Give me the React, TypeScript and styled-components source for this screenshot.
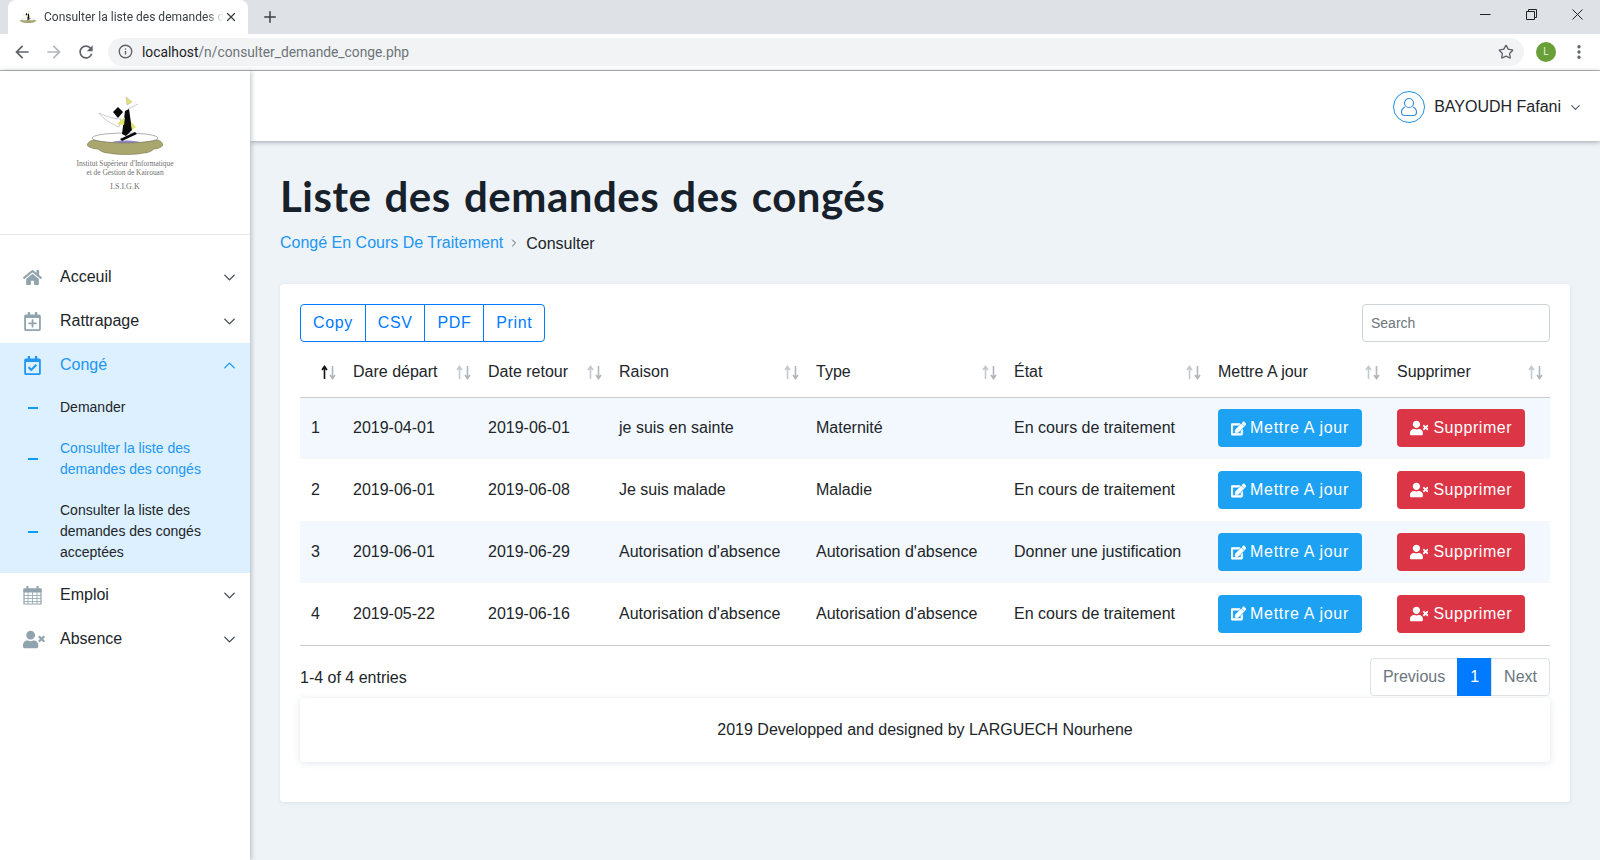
import { FC, ReactNode } from "react";
import styled, { createGlobalStyle } from "styled-components";
import { ChevronDown, ChevronRight, ChevronUp, EllipsisVertical, Info, Plus, Star, X } from "lucide-react";
import { FaEdit, FaHome, FaRegCalendarCheck, FaRegCalendarPlus, FaUserTimes } from "react-icons/fa";

const columns: { label: string; width: number }[] = [
  { label: "", width: 41 },
  { label: "Dare départ", width: 135 },
  { label: "Date retour", width: 131 },
  { label: "Raison", width: 197 },
  { label: "Type", width: 198 },
  { label: "État", width: 204 },
  { label: "Mettre A jour", width: 179 },
  { label: "Supprimer", width: 165 },
];

const rows = [
  { id: 1, start: "2019-04-01", end: "2019-06-01", reason: "je suis en sainte", type: "Maternité", state: "En cours de traitement" },
  { id: 2, start: "2019-06-01", end: "2019-06-08", reason: "Je suis malade", type: "Maladie", state: "En cours de traitement" },
  { id: 3, start: "2019-06-01", end: "2019-06-29", reason: "Autorisation d'absence", type: "Autorisation d'absence", state: "Donner une justification" },
  { id: 4, start: "2019-05-22", end: "2019-06-16", reason: "Autorisation d'absence", type: "Autorisation d'absence", state: "En cours de traitement" },
];

const Global = createGlobalStyle`
  html, body { margin: 0; padding: 0; background: #fff; }
  body { font-family: "Liberation Sans", Arial, sans-serif; font-size: 16px; color: #212529; }
  * { box-sizing: border-box; }
`;

const Page = styled.div`
  width: 1600px;
  height: 860px;
  overflow: hidden;
  display: flex;
  flex-direction: column;
`;

/* browser chrome */
const TabStrip = styled.div`
  height: 34px;
  background: #dee1e6;
  display: flex;
  align-items: flex-end;
  padding-left: 8px;
`;
const Tab = styled.div`
  width: 240px;
  height: 34px;
  background: #fff;
  border-radius: 8px 8px 0 0;
  display: flex;
  align-items: center;
  padding: 0 10px 0 12px;
  color: #3c4043;
`;
const TabTitle = styled.span`
  flex: 1;
  margin-left: 8px;
  font: 12px Roboto, sans-serif;
  white-space: nowrap;
  overflow: hidden;
  -webkit-mask-image: linear-gradient(to right, #000 90%, transparent);
  mask-image: linear-gradient(to right, #000 90%, transparent);
`;
const NewTab = styled.div`
  margin-left: 13px;
  height: 34px;
  display: flex;
  align-items: center;
  color: #3c4043;
`;
const WindowControls = styled.div`
  margin-left: auto;
  height: 34px;
  display: flex;
  color: #222;
`;
const WindowButton = styled.div`
  width: 46px;
  height: 28px;
  display: flex;
  align-items: center;
  justify-content: center;
`;
const Toolbar = styled.div`
  height: 37px;
  background: #fff;
  border-bottom: 1px solid #b4b4b4;
  display: flex;
  align-items: center;
  padding: 0 0 1px 12px;
`;
const NavIcon = styled.div<{ $muted?: boolean }>`
  width: 32px;
  display: flex;
  color: ${(p) => (p.$muted ? "#b4b6b9" : "#5f6368")};
`;
const Omnibox = styled.div`
  width: 1416px;
  height: 28px;
  background: #f1f3f4;
  border-radius: 14px;
  display: flex;
  align-items: center;
  padding: 0 10px 0 10px;
  color: #5f6368;
  font: 13.8px Roboto, sans-serif;
`;
const Url = styled.span`
  margin-left: 9px;
  flex: 1;
  color: #6f7479;
  b {
    font-weight: 400;
    color: #202124;
  }
`;
const Avatar = styled.div`
  width: 20px;
  height: 20px;
  margin-left: 12px;
  border-radius: 50%;
  background: #689f38;
  color: #e8f2dd;
  font: 10px Roboto, sans-serif;
  display: flex;
  align-items: center;
  justify-content: center;
`;
const MenuDots = styled.div`
  margin-left: 14px;
  display: flex;
  color: #5f6368;
`;

/* app frame */
const Frame = styled.div`
  flex: 1;
  display: flex;
  min-height: 0;
`;
const Sidebar = styled.aside`
  width: 250px;
  flex: none;
  background: #fff;
  box-shadow: 1px 0 5px rgba(60, 70, 80, 0.35);
  z-index: 2;
`;
const LogoBlock = styled.div`
  height: 164px;
  border-bottom: 1px solid #e6e8ea;
  display: flex;
  flex-direction: column;
  align-items: center;
  padding-top: 26px;
  margin-bottom: 20px;
`;
const LogoText = styled.div`
  margin-top: 4px;
  font: 7.400px/9px "Liberation Serif", serif;
  color: #707070;
  text-align: center;
`;
const LogoAbbr = styled.div`
  margin-top: 5px;
  font: 8px/9px "Liberation Serif", serif;
  color: #707070;
`;
const NavGroup = styled.div<{ $open?: boolean }>`
  background: ${(p) => (p.$open ? "#dcf0ff" : "transparent")};
`;
const NavRow = styled.div<{ $active?: boolean }>`
  height: 44px;
  display: flex;
  align-items: center;
  padding: 0 11px 0 23px;
  color: ${(p) => (p.$active ? "#2196f3" : "#212529")};
  & > svg {
    color: ${(p) => (p.$active ? "#2196f3" : "#3f4a52")};
  }
`;
const NavIconBox = styled.span<{ $active?: boolean }>`
  width: 37px;
  height: 19px;
  display: flex;
  align-items: center;
  font-size: 19px;
  color: ${(p) => (p.$active ? "#2196f3" : "#90a4ae")};
`;
const NavLabel = styled.span`
  flex: 1;
`;
const SubItem = styled.div<{ $active?: boolean }>`
  display: flex;
  align-items: center;
  gap: 22px;
  padding: 10px 30px 10px 28px;
  font-size: 14px;
  line-height: 21px;
  color: ${(p) => (p.$active ? "#2196f3" : "#212529")};
  &::before {
    content: "";
    width: 10px;
    height: 2px;
    flex: none;
    background: #0a9cff;
  }
`;
const WideUserIcon = styled(FaUserTimes)`
  width: 1.150em;
  height: 1em;
  flex: none;
`;
const BoldEditIcon = styled(FaEdit)`
  stroke: currentColor;
  stroke-width: 24px;
`;

/* main column */
const Main = styled.main`
  flex: 1;
  min-width: 0;
  background: #eef3f7;
`;
const Topbar = styled.header`
  height: 70px;
  background: #fff;
  box-shadow: 0 1px 5px rgba(60, 70, 80, 0.45);
  display: flex;
  align-items: center;
  justify-content: flex-end;
  padding: 2px 17px 0 0;
`;
const UserBadge = styled.div`
  width: 32px;
  height: 32px;
  border: 1px solid #1e90e0;
  border-radius: 50%;
  display: flex;
  align-items: center;
  justify-content: center;
  margin-right: 9px;
`;
const UserName = styled.span`
  margin-right: 7px;
`;
const Content = styled.div`
  padding: 30px 30px 0;
`;
const Title = styled.h1`
  margin: 0;
  font: 700 42px/50px "Comic Sans MS", Lato, sans-serif;
  letter-spacing: 0.5px;
  word-spacing: 2.500px;
  color: #17212b;
`;
const Crumbs = styled.nav`
  margin-top: 10px;
  height: 24px;
  display: flex;
  align-items: center;
  line-height: 24px;
  a {
    color: #2196f3;
  }
  svg {
    margin: 0 6px 0 5px;
    color: #555f68;
  }
  span {
    padding-top: 2px;
  }
`;
const Card = styled.section`
  margin-top: 29px;
  padding: 20px 20px 40px;
  background: #fff;
  border-radius: 4px;
  box-shadow: 0 1px 4px rgba(120, 140, 160, 0.15);
`;
const TableTools = styled.div`
  display: flex;
  justify-content: space-between;
`;
const ButtonGroup = styled.div`
  display: flex;
`;
const ExportButton = styled.button`
  height: 38px;
  padding: 0 12px;
  margin-left: -1px;
  background: #fff;
  border: 1px solid #007bff;
  color: #007bff;
  font: 16px "Liberation Sans", sans-serif;
  letter-spacing: 0.6px;
  &:first-child {
    margin-left: 0;
    border-radius: 4px 0 0 4px;
  }
  &:last-child {
    border-radius: 0 4px 4px 0;
  }
`;
const Search = styled.input`
  width: 188px;
  height: 38px;
  padding: 0 8px;
  border: 1px solid #ced4da;
  border-radius: 4px;
  font: 14px "Liberation Sans", sans-serif;
  &::placeholder {
    color: #6c757d;
  }
`;
const Table = styled.table`
  width: 1250px;
  table-layout: fixed;
  border-collapse: collapse;
  border-bottom: 1px solid #cbcbcb;
`;
const HeadCell = styled.th`
  height: 55px;
  padding: 6px 4px 0 12px;
  font-weight: 400;
  text-align: left;
  border-bottom: 1px solid #cbcbcb;
  &:last-child {
    padding-right: 6px;
  }
`;
const HeadInner = styled.div`
  display: flex;
  align-items: center;
  justify-content: space-between;
`;
const Row = styled.tr<{ $striped: boolean }>`
  height: 62px;
  background: ${(p) => (p.$striped ? "#f2f8fd" : "#fff")};
`;
const Cell = styled.td`
  padding: 0 0 0 12px;
  white-space: nowrap;
  &:first-child {
    padding-left: 11px;
  }
`;
const ActionButton = styled.button<{ $tone: "blue" | "red" }>`
  height: 38px;
  padding: 0 13px;
  display: inline-flex;
  align-items: center;
  gap: ${(p) => (p.$tone === "blue" ? "4px" : "5px")};
  border: 0;
  border-radius: 4px;
  color: #fff;
  background: ${(p) => (p.$tone === "blue" ? "#1da1f2" : "#dc3545")};
  font: 16px "Liberation Sans", sans-serif;
  letter-spacing: ${(p) => (p.$tone === "blue" ? "0.7px" : "0.55px")};
`;
const TableFoot = styled.div`
  margin-top: 12px;
  display: flex;
  align-items: center;
  justify-content: space-between;
  & > span {
    padding-top: 2px;
  }
`;
const Pager = styled.div`
  display: flex;
  height: 38px;
`;
const PageLink = styled.span<{ $current?: boolean }>`
  padding: 0 12px;
  display: flex;
  align-items: center;
  border: 1px solid ${(p) => (p.$current ? "#007bff" : "#dee2e6")};
  background: ${(p) => (p.$current ? "#007bff" : "#fff")};
  color: ${(p) => (p.$current ? "#fff" : "#6c757d")};
  margin-left: -1px;
  &:first-child {
    border-radius: 4px 0 0 4px;
  }
  &:last-child {
    border-radius: 0 4px 4px 0;
  }
`;
const Footer = styled.footer`
  margin-top: 2px;
  height: 64px;
  display: flex;
  align-items: center;
  justify-content: center;
  border-radius: 4px;
  box-shadow: 0 1px 7px rgba(120, 140, 160, 0.22);
`;

const Logo: FC<{ size: number }> = ({ size }) => (
  <svg width={size} height={(size * 58) / 76} viewBox="0 0 76 58">
    <path d="M12 16c6 3 14 6 22 6l-2 8c-7-3-16-8-20-14z" fill="#fff" stroke="#999" strokeWidth=".5" />
    <path d="M41 12L51 7" stroke="#999" strokeWidth=".5" />
    <path d="M39 0l6 5-5 3z" fill="#e3e56a" stroke="#888" strokeWidth=".3" />
    <path d="M26 15l5-5 5 5-5 6z" fill="#0a0a0a" />
    <ellipse cx="38" cy="41" rx="33" ry="5" fill="#fff" stroke="#777" strokeWidth=".6" />
    <path d="M25 45c6-2 20-2 28 0l-12 2z" fill="#8f86c8" />
    <path d="M0 48c1-3 4-5 7-5 13 4 49 4 63 0 3 0 6 3 6 5-1 2-5 4-9 4-2 2-6 4-10 4-10 2-26 2-36 0-4 0-8-2-10-4-5 0-10-2-11-4z" fill="#aaa76e" stroke="#6f6d45" strokeWidth=".5" />
    <path d="M38 14l4-2 3 21-6 6-4-2z" fill="#0a0a0a" />
    <path d="M30 27l8-7-1 8z" fill="#dfe36a" />
    <path d="M44 25l5 5-4 3z" fill="#e3e56a" />
    <path d="M33 42l15-7 2 2-15 7z" fill="#0a0a0a" />
  </svg>
);

const SortArrows: FC<{ active?: boolean }> = ({ active }) => (
  <svg width="17" height="15" viewBox="0 0 17 15" fill="none" strokeWidth="1.6">
    <path d="M4.500 14V2M2 5l2.500-3.500L7 5" stroke={active ? "#111" : "#c4c9cf"} />
    <path d="M12.500 1v12M10 10l2.500 3.500L15 10" stroke="#b0b6bd" />
  </svg>
);

const UserOutline = () => (
  <svg width="18" height="20" viewBox="0 0 18 20" fill="none" stroke="#3f8fe0" strokeWidth="1.200">
    <circle cx="9" cy="6" r="4.500" />
    <path d="M5 10c-2 1-3.500 2.500-3.500 5 0 2 1 3.500 3 3.500h9c2 0 3-1.500 3-3.500 0-2.500-1.500-4-3.500-5" />
  </svg>
);

const CalendarGrid = () => (
  <svg width="19" height="19" viewBox="0 0 19 19" fill="none" stroke="currentColor">
    <path d="M1 3h17v15H1z" strokeWidth="1.200" />
    <path d="M1 3h17v3H1z" fill="currentColor" />
    <path d="M4.400 0v4.500M14.600 0v4.500" strokeWidth="2" />
    <path d="M1 9.500h17M1 12.500h17M1 15.500h17M5 6v12M9.500 6v12M14 6v12" strokeWidth=".8" />
  </svg>
);

const NavItem: FC<{ icon: ReactNode; label: string }> = ({ icon, label }) => (
  <NavRow>
    <NavIconBox>{icon}</NavIconBox>
    <NavLabel>{label}</NavLabel>
    <ChevronDown size={19} strokeWidth={1.7} />
  </NavRow>
);

const App: FC = () => (
  <Page>
    <Global />
    <TabStrip>
      <Tab>
        <Logo size={16} />
        <TabTitle>Consulter la liste des demandes des congés</TabTitle>
        <X size={14} strokeWidth={2.2} />
      </Tab>
      <NewTab>
        <Plus size={18} strokeWidth={2} />
      </NewTab>
      <WindowControls>
        <WindowButton>
          <svg width="11" height="11" viewBox="0 0 11 11" stroke="#222" fill="none">
            <path d="M0 5.500h10.500" />
          </svg>
        </WindowButton>
        <WindowButton>
          <svg width="11" height="11" viewBox="0 0 11 11" stroke="#222" fill="none">
            <path d="M.5 2.500h8v8h-8zM2.500 2.500v-2h8v8h-2" />
          </svg>
        </WindowButton>
        <WindowButton>
          <svg width="11" height="11" viewBox="0 0 11 11" stroke="#222" fill="none">
            <path d="M.5.500l10 10M10.500.500l-10 10" />
          </svg>
        </WindowButton>
      </WindowControls>
    </TabStrip>
    <Toolbar>
      <NavIcon>
        <svg width="20" height="20" viewBox="0 0 24 24" fill="currentColor">
          <path d="M20 11H7.830l5.590-5.590L12 4l-8 8 8 8 1.410-1.410L7.830 13H20v-2z" />
        </svg>
      </NavIcon>
      <NavIcon $muted>
        <svg width="20" height="20" viewBox="0 0 24 24" fill="currentColor">
          <path d="M4 11h12.170l-5.590-5.590L12 4l8 8-8 8-1.410-1.410L16.170 13H4v-2z" />
        </svg>
      </NavIcon>
      <NavIcon>
        <svg width="20" height="20" viewBox="0 0 24 24" fill="currentColor">
          <path d="M17.650 6.350A7.958 7.958 0 0 0 12 4c-4.420 0-7.990 3.580-7.990 8s3.570 8 7.990 8c3.730 0 6.840-2.550 7.730-6h-2.080A5.990 5.990 0 0 1 12 18c-3.310 0-6-2.690-6-6s2.690-6 6-6c1.660 0 3.140.690 4.220 1.780L13 11h7V4l-2.350 2.350z" />
        </svg>
      </NavIcon>
      <Omnibox>
        <Info size={15} strokeWidth={2.200} />
        <Url>
          <b>localhost</b>/n/consulter_demande_conge.php
        </Url>
        <Star size={16} strokeWidth={2} />
      </Omnibox>
      <Avatar>L</Avatar>
      <MenuDots>
        <EllipsisVertical size={18} strokeWidth={2.4} />
      </MenuDots>
    </Toolbar>
    <Frame>
      <Sidebar>
        <LogoBlock>
          <Logo size={76} />
          <LogoText>
            Institut Supérieur d'Informatique
            <br />
            et de Gestion de Kairouan
          </LogoText>
          <LogoAbbr>I.S.I.G.K</LogoAbbr>
        </LogoBlock>
        <NavItem icon={<FaHome />} label="Acceuil" />
        <NavItem icon={<FaRegCalendarPlus />} label="Rattrapage" />
        <NavGroup $open>
          <NavRow $active>
            <NavIconBox $active>
              <FaRegCalendarCheck />
            </NavIconBox>
            <NavLabel>Congé</NavLabel>
            <ChevronUp size={19} strokeWidth={1.7} />
          </NavRow>
          <SubItem>Demander</SubItem>
          <SubItem $active>Consulter la liste des demandes des congés</SubItem>
          <SubItem>Consulter la liste des demandes des congés acceptées</SubItem>
        </NavGroup>
        <NavItem icon={<CalendarGrid />} label="Emploi" />
        <NavItem icon={<WideUserIcon />} label="Absence" />
      </Sidebar>
      <Main>
        <Topbar>
          <UserBadge>
            <UserOutline />
          </UserBadge>
          <UserName>BAYOUDH Fafani</UserName>
          <ChevronDown size={15} strokeWidth={1.7} color="#4a5560" />
        </Topbar>
        <Content>
          <Title>Liste des demandes des congés</Title>
          <Crumbs>
            <a>Congé En Cours De Traitement</a>
            <ChevronRight size={12} strokeWidth={2} />
            <span>Consulter</span>
          </Crumbs>
          <Card>
            <TableTools>
              <ButtonGroup>
                <ExportButton>Copy</ExportButton>
                <ExportButton>CSV</ExportButton>
                <ExportButton>PDF</ExportButton>
                <ExportButton>Print</ExportButton>
              </ButtonGroup>
              <Search placeholder="Search" />
            </TableTools>
            <Table>
              <colgroup>
                {columns.map((c) => (
                  <col key={c.label} width={c.width} />
                ))}
              </colgroup>
              <thead>
                <tr>
                  {columns.map((c, i) => (
                    <HeadCell key={c.label}>
                      <HeadInner>
                        <span>{c.label}</span>
                        <SortArrows active={i === 0} />
                      </HeadInner>
                    </HeadCell>
                  ))}
                </tr>
              </thead>
              <tbody>
                {rows.map((r) => (
                  <Row key={r.id} $striped={r.id % 2 === 1}>
                    <Cell>{r.id}</Cell>
                    <Cell>{r.start}</Cell>
                    <Cell>{r.end}</Cell>
                    <Cell>{r.reason}</Cell>
                    <Cell>{r.type}</Cell>
                    <Cell>{r.state}</Cell>
                    <Cell>
                      <ActionButton $tone="blue">
                        <BoldEditIcon size={15} />
                        Mettre A jour
                      </ActionButton>
                    </Cell>
                    <Cell>
                      <ActionButton $tone="red">
                        <WideUserIcon size={17} />
                        Supprimer
                      </ActionButton>
                    </Cell>
                  </Row>
                ))}
              </tbody>
            </Table>
            <TableFoot>
              <span>1-4 of 4 entries</span>
              <Pager>
                <PageLink>Previous</PageLink>
                <PageLink $current>1</PageLink>
                <PageLink>Next</PageLink>
              </Pager>
            </TableFoot>
            <Footer>2019 Developped and designed by LARGUECH Nourhene</Footer>
          </Card>
        </Content>
      </Main>
    </Frame>
  </Page>
);

export default App;
